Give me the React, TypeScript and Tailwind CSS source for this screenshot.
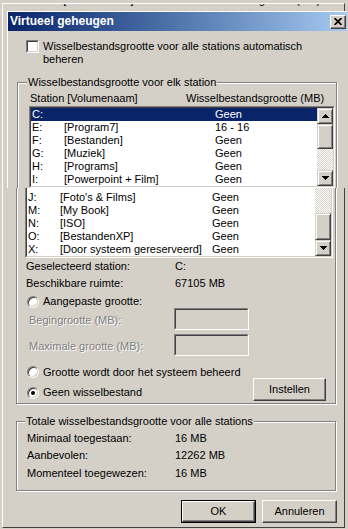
import React from 'react';

type Drive = [string, string, string];

const topDrives: Drive[] = [
  ['C:', '', 'Geen'],
  ['E:', '[Program7]', '16 - 16'],
  ['F:', '[Bestanden]', 'Geen'],
  ['G:', '[Muziek]', 'Geen'],
  ['H:', '[Programs]', 'Geen'],
  ['I:', '[Powerpoint + Film]', 'Geen'],
];

const bottomDrives: Drive[] = [
  ['J:', "[Foto's & Films]", 'Geen'],
  ['M:', '[My Book]', 'Geen'],
  ['N:', '[ISO]', 'Geen'],
  ['O:', '[BestandenXP]', 'Geen'],
  ['X:', '[Door systeem gereserveerd]', 'Geen'],
];

const raised =
  'border border-t-white border-l-white border-r-[#404040] border-b-[#404040] shadow-[inset_-1px_-1px_0_#808080] bg-[#d4d0c8]';
const scrollBtn =
  'border border-t-[#d4d0c8] border-l-[#d4d0c8] border-r-[#404040] border-b-[#404040] shadow-[inset_1px_1px_0_#fff,inset_-1px_-1px_0_#808080] bg-[#d4d0c8]';
const track =
  'bg-[image:repeating-conic-gradient(#d4d0c8_0%_25%,#ffffff_0%_50%)] bg-[length:2px_2px]';
const etched = 'border border-[#808080] shadow-[inset_1px_1px_0_#fff,1px_1px_0_#fff]';
const disabled = 'text-[#808080] [text-shadow:1px_1px_0_#fff]';

const Arrow = ({ up }: { up?: boolean }) => (
  <svg width="7" height="4" viewBox="0 0 7 4" shapeRendering="crispEdges">
    <polygon points={up ? '3.5,0 7,4 0,4' : '0,0 7,0 3.5,4'} fill="#000" />
  </svg>
);

const Sunken = ({ className, inner, children }: { className: string; inner: string; children?: React.ReactNode }) => (
  <div className={`border border-t-[#808080] border-l-[#808080] border-r-white border-b-white ${className}`}>
    <div className={`h-full border border-t-[#404040] border-l-[#404040] border-r-[#d4d0c8] border-b-[#d4d0c8] ${inner}`}>
      {children}
    </div>
  </div>
);

const Radio = ({ checked }: { checked?: boolean }) => (
  <div className="w-[12px] h-[12px] shrink-0 rounded-full border border-t-[#808080] border-l-[#808080] border-r-white border-b-white flex items-center justify-center">
    <div className="w-[10px] h-[10px] rounded-full bg-white shadow-[inset_1px_1px_0_#404040,inset_-1px_-1px_0_#d4d0c8] flex items-center justify-center">
      {checked && <div className="w-[4px] h-[4px] rounded-full bg-black" />}
    </div>
  </div>
);

const Row = ({ d, sel, w1, w2 }: { d: Drive; sel?: boolean; w1: string; w2: string }) => (
  <div className={`h-[13px] flex whitespace-nowrap pl-[1px] ${sel ? 'bg-[#0a246a] text-white' : ''}`}>
    <span className={w1}>{d[0]}</span>
    <span className={w2}>{d[1]}</span>
    <span>{d[2]}</span>
  </div>
);

const Info = ({ label, value, mt }: { label: string; value: string; mt: string }) => (
  <div className={`flex h-[13px] ml-[10px] ${mt}`}>
    <span className="w-[148px]">{label}</span>
    <span>{value}</span>
  </div>
);

export default function App() {
  return (
    <div className="relative w-[348px] h-[529px] overflow-hidden bg-[#d4d0c8] font-['Liberation_Sans',Arial,sans-serif] text-[11px] leading-[13px] text-black">
      {/* dialog behind (scrolled list) */}
      <div className="ml-[2px] mt-[3px] w-[343px] h-[525px] border border-t-white border-l-white border-r-[#404040] border-b-[#404040]">
        <div className="h-[6px] overflow-hidden">
          <div className="-mt-[10px] flex whitespace-nowrap">
            <span className="ml-[23px] w-[156px]">Station [Volumenaam]</span>
            <span>Wisselbestandsgrootte (MB)</span>
          </div>
        </div>

        <div className={`relative mt-[140px] ml-[13px] w-[320px] pb-[2px] ${etched}`}>
          <Sunken className="mt-[27px] ml-[8px] w-[308px] h-[80px]" inner="bg-white flex">
            <div className="flex-1 overflow-hidden">
              <div className="h-[11px] overflow-hidden" />
              {bottomDrives.map((d) => (
                <Row key={d[0]} d={d} w1="w-[32px]" w2="w-[152px]" />
              ))}
            </div>
            <div className="w-[16px] flex flex-col">
              <div className={`h-[33px] ${track}`} />
              <div className={`h-[27px] ${scrollBtn}`} />
              <div className={`h-[16px] flex items-center justify-center ${scrollBtn}`}>
                <Arrow />
              </div>
            </div>
          </Sunken>

          <div className="flex h-[13px] mt-[2px] ml-[9px]">
            <span className="w-[149px]">Geselecteerd station:</span>
            <span>C:</span>
          </div>
          <div className="flex h-[13px] mt-[4px] ml-[9px]">
            <span className="w-[149px]">Beschikbare ruimte:</span>
            <span>67105 MB</span>
          </div>

          <div className="flex items-center gap-[4px] h-[13px] mt-[5px] ml-[10px]">
            <Radio />
            <span>Aangepaste grootte:</span>
          </div>

          <div className="flex items-center h-[22px] ml-[12px]">
            <span className={`w-[145px] pt-[3px] ${disabled}`}>Begingrootte (MB):</span>
            <Sunken className="w-[75px] h-[22px]" inner="bg-[#d4d0c8]" />
          </div>
          <div className="flex items-center h-[22px] mt-[4px] ml-[12px]">
            <span className={`w-[145px] pt-[3px] ${disabled}`}>Maximale grootte (MB):</span>
            <Sunken className="w-[75px] h-[22px]" inner="bg-[#d4d0c8]" />
          </div>

          <div className="flex items-center gap-[4px] h-[12px] mt-[10px] ml-[10px]">
            <Radio />
            <span>Grootte wordt door het systeem beheerd</span>
          </div>

          <div className="flex items-start h-[23px] ml-[10px] mr-[9px]">
            <div className="flex items-center gap-[4px] mt-[8px]">
              <Radio checked />
              <span>Geen wisselbestand</span>
            </div>
            <div className={`ml-auto w-[73px] h-[23px] flex items-center justify-center ${raised}`}>Instellen</div>
          </div>
        </div>

        <div className={`relative mt-[17px] ml-[13px] w-[320px] pb-[10px] ${etched}`}>
          <span className="absolute -top-[7px] left-[8px] px-[1px] bg-[#d4d0c8] whitespace-nowrap">
            Totale wisselbestandsgrootte voor alle stations
          </span>
          <Info label="Minimaal toegestaan:" value="16 MB" mt="mt-[10px]" />
          <Info label="Aanbevolen:" value="12262 MB" mt="mt-[4px]" />
          <Info label="Momenteel toegewezen:" value="16 MB" mt="mt-[5px]" />
        </div>

        <div className="flex justify-end gap-[6px] pr-[7px] mt-[9px]">
          <div className="w-[75px] h-[23px] border border-black flex">
            <div className={`flex-1 flex items-center justify-center ${raised}`}>OK</div>
          </div>
          <div className={`w-[75px] h-[23px] flex items-center justify-center ${raised}`}>Annuleren</div>
        </div>
      </div>

      {/* dialog in front */}
      <div className="absolute left-[7px] top-[11px] w-[340px] h-[177px] overflow-hidden bg-[#d4d0c8] border-l border-t border-white">
        <div className="h-[19px] flex items-center pl-[2px] pr-[1px] bg-linear-to-r from-[#0a246a] to-[#a6caf0]">
          <span className="text-white font-bold text-[12px]">Virtueel geheugen</span>
          <div className={`ml-auto w-[16px] h-[14px] flex items-center justify-center ${raised}`}>
            <svg width="8" height="7" viewBox="0 0 8 7">
              <path d="M0.5 0 L7.5 7 M7.5 0 L0.5 7" stroke="#000" strokeWidth="1.7" />
            </svg>
          </div>
        </div>

        <div className="flex mt-[9px] ml-[18px]">
          <Sunken className="w-[13px] h-[13px] shrink-0" inner="bg-white" />
          <span className="ml-[4px] w-[270px]">Wisselbestandsgrootte voor alle stations automatisch beheren</span>
        </div>

        <div className={`relative mt-[16px] ml-[9px] w-[320px] h-[200px] ${etched}`}>
          <span className="absolute -top-[7px] left-[9px] px-[1px] bg-[#d4d0c8] whitespace-nowrap">
            Wisselbestandsgrootte voor elk station
          </span>
          <div className="flex h-[13px] mt-[9px] ml-[12px] whitespace-nowrap">
            <span className="w-[156px]">Station [Volumenaam]</span>
            <span>Wisselbestandsgrootte (MB)</span>
          </div>
          <Sunken className="mt-[1px] ml-[11px] w-[306px] h-[82px]" inner="bg-white flex">
            <div className="flex-1 overflow-hidden">
              {topDrives.map((d, i) => (
                <Row key={d[0]} d={d} sel={i === 0} w1="w-[32px]" w2="w-[151px]" />
              ))}
            </div>
            <div className="w-[16px] flex flex-col">
              <div className={`h-[16px] flex items-center justify-center ${scrollBtn}`}>
                <Arrow up />
              </div>
              <div className={`h-[25px] ${scrollBtn}`} />
              <div className={`flex-1 ${track}`} />
              <div className={`h-[16px] flex items-center justify-center ${scrollBtn}`}>
                <Arrow />
              </div>
            </div>
          </Sunken>
        </div>
      </div>
    </div>
  );
}
